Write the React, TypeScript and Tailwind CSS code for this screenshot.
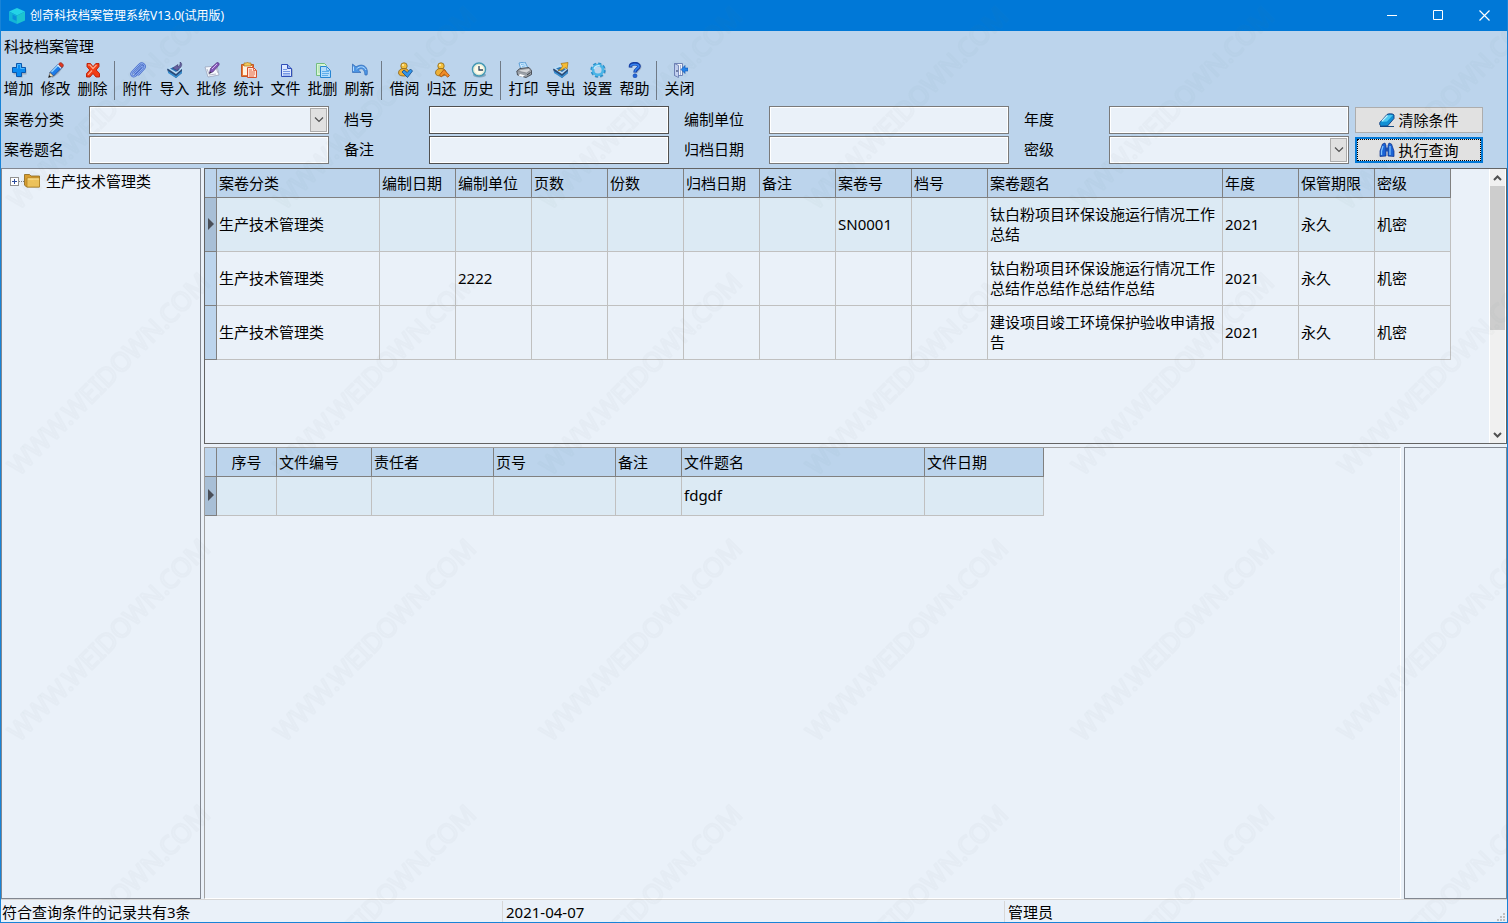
import { useState } from 'react'
import type { ReactNode } from 'react'

const ICONS: Record<string, ReactNode> = {
  add: (
    <>
      <path d="M6.5 3.5h5v4h4v5h-4v3h-5v-3h-4v-5h4z" fill="#8a9099" opacity=".6" />
      <path d="M5.5 1.5h5v4h4v5h-4v4h-5v-4h-4v-5h4z" fill="#0b8af0" stroke="#0a57ad" />
      <path d="M6.5 6.5v-4h3v4h4" fill="none" stroke="#4db8ff" />
    </>
  ),
  edit: (
    <>
      <path d="M4 15.5 10 11l5-7" fill="none" stroke="#7c8896" strokeWidth="1.5" opacity=".5" />
      <path d="m2 10.500 8.500-8.500 3.500 3.500-8.500 8.500z" fill="#1d7ce8" stroke="#0b3f92" strokeWidth=".8" />
      <path d="m3.500 10 7.500-7.500" stroke="#8fd2ff" strokeWidth="1.5" />
      <path d="m10.500 2 1.200-1c1.500-1.200 4.600 1.700 3.300 3.400l-1.200 1.200z" fill="#e23a22" stroke="#8f1c10" strokeWidth=".7" />
      <path d="m9.700 3 3.400 3.400" stroke="#e8eef5" strokeWidth="1.200" />
      <path d="m2 10.500-1.500 5L5.500 14z" fill="#f5e2b4" stroke="#4b4b55" strokeWidth=".6" />
      <path d="m.5 15.500.8-2.500 1.700 1.700z" fill="#111" />
    </>
  ),
  remove: (
    <>
      <path d="M2 1.500h3.500L8 4.700l2.800-3.200H14v3L11.200 8l3.300 3.500V15H11l-3-3.500L5 15H1.500v-3.500L4.800 8 2 4.700z" fill="#f23c14" stroke="#b81c06" strokeWidth=".9" />
      <path d="M3 3h2l3 3.500L11.500 3M3 12.800 7 8.500" fill="none" stroke="#ffab8c" strokeWidth="1.2" />
    </>
  ),
  attach: (
    <>
      <path d="m4.500 11.500 6.500-7c1.500-1.300 3 .2 1.800 1.600L6 13.300c-2.800 2.700-6.200-.5-3.700-3.300L9.500 2.500c2.800-2.600 7 .7 4.500 4L8.500 12.500" fill="none" stroke="#4a6fce" strokeWidth="2.200" strokeLinecap="round" />
      <path d="m4.500 11.500 6.500-7c1.500-1.300 3 .2 1.800 1.600L6 13.300c-2.800 2.700-6.200-.5-3.700-3.300L9.500 2.500c2.800-2.600 7 .7 4.500 4L8.500 12.500" fill="none" stroke="#9dbcf7" strokeWidth=".9" strokeLinecap="round" />
    </>
  ),
  importIn: (
    <>
      <path d="m0 7 5-3 10 3v4l-6 5L1 10z" fill="#2a4b78" />
      <path d="m0 6 6-3 10 3-7 6z" fill="#bcdcf5" />
      <path d="m3 6.500 4-1.500 6 2-4 3z" fill="#2d77b8" />
      <path d="m1 9 8 5 6-5v2l-6 5-8-5z" fill="#398fd0" />
      <path d="M13 0c3 1 2 6-2 7v2L5.500 6 11 2.500V5c1.500-.8 2.500-2.500 2-5z" fill="#66609f" stroke="#353565" strokeWidth=".5" />
    </>
  ),
  batchEdit: (
    <>
      <path d="m1 5 12-1 2 9-11 2z" fill="#f7faff" stroke="#949cb5" strokeWidth=".7" />
      <path d="m3 7 2 5M12 6l2 5M5 13l7-1" stroke="#a3a9bd" strokeWidth=".8" />
      <path d="m5.500 11 1-4.500 6-5.500c1.200-1.200 3.500.2 2.300 2.300l-6 6.700z" fill="#8257b8" stroke="#4d2e78" strokeWidth=".7" />
      <path d="m8 7 5-5" stroke="#d9b8ef" />
      <path d="m4.500 12.500 2-3 1 1z" fill="#35313f" />
    </>
  ),
  stats: (
    <>
      <path d="M.5 2.500h12v12H.5z" fill="#e87938" stroke="#c05724" />
      <path d="M2 4h9v9H2z" fill="#fff2df" />
      <path d="M3 1h2.500l1-1 1 1H10v3H3z" fill="#f3c65b" stroke="#a87824" strokeWidth=".7" />
      <path d="M6.500 5.500h6l3 3v7h-9z" fill="#ffe2d4" stroke="#d54f2b" />
      <path d="M12.500 5.500v3h3M8 8h3M8 10h6M8 12h6M8 14h5" fill="none" stroke="#e0623f" strokeWidth=".9" />
    </>
  ),
  file: (
    <>
      <path d="M4 3.500h7l4 4V15H4z" fill="#7e8ba5" opacity=".5" />
      <path d="M3.500 2.500h6l4 4v8h-10z" fill="#dbe7ff" stroke="#304fb8" />
      <path d="M9.500 2.500v4h4" fill="#8daae8" stroke="#304fb8" />
      <path d="M5 7.500h4M5 9.500h7M5 11.500h7M5 13h7" stroke="#7597e4" />
    </>
  ),
  batchDelete: (
    <>
      <path d="M1.500 1.500h8l2 2v10h-10z" fill="#d8f5d6" stroke="#74bd80" />
      <path d="M3 4h3M3 6h3M3 8h3M3 10h3" stroke="#a3daa5" />
      <path d="M5.500 4.500h6l4 4v7h-10z" fill="#b4dcfb" stroke="#2785d2" />
      <path d="M11.500 4.500v4h4M7 9.500h7M7 11.500h7M7 13.500h6" fill="none" stroke="#5fadea" />
    </>
  ),
  refresh: (
    <>
      <path d="M.5 2v8.500H9L6.300 8c3-2.500 6.200-1.500 6.700 5h2C17 6 11.500 0 4 4.800z" fill="#4b94e3" stroke="#346ab4" strokeWidth=".7" />
      <path d="M1.500 4.500v4.500M4.500 7c3-3.200 7.500-3 9.500 1" fill="none" stroke="#b5dcff" />
    </>
  ),
  borrow: (
    <>
      <circle cx="7" cy="4" r="3.200" fill="#f6c23d" stroke="#8a6516" strokeWidth=".8" />
      <path d="M1.500 11c0-3 2-4.500 5.500-4.500s5 2 5 4.500-2.500 3-5 3-5.500-.5-5.500-3z" fill="#eeb037" stroke="#8a6516" strokeWidth=".8" />
      <circle cx="6" cy="3" r="1" fill="#fff1b8" />
      <path d="m5 10 2-2 3.200 2.500L13.500 7l2 2-5 6.500z" fill="#3095ec" stroke="#124887" strokeWidth=".8" />
    </>
  ),
  giveBack: (
    <>
      <circle cx="7" cy="4" r="3.200" fill="#f6c23d" stroke="#8a6516" strokeWidth=".8" />
      <path d="M1.500 11c0-3 2-4.500 5.500-4.500s5 2 5 4.500-2.500 3-5 3-5.500-.5-5.500-3z" fill="#eeb037" stroke="#8a6516" strokeWidth=".8" />
      <circle cx="6" cy="3" r="1" fill="#fff1b8" />
      <path d="m5.500 13 4.500-5.500 5.500 6-1.700 1.700-3.600-3-3 2.800z" fill="#f08c28" stroke="#a24b10" strokeWidth=".8" />
    </>
  ),
  history: (
    <>
      <ellipse cx="8.500" cy="13" rx="6.500" ry="2.500" fill="#6889a0" opacity=".6" />
      <circle cx="8" cy="7.500" r="6.500" fill="#fffbe8" stroke="#4599b5" strokeWidth="1.500" />
      <circle cx="8" cy="7.500" r="5.200" fill="none" stroke="#c3dbc9" strokeWidth=".7" />
      <path d="M8 4v4h4" fill="none" stroke="#2b4660" strokeWidth="1.300" />
    </>
  ),
  print: (
    <>
      <path d="m3 1 6-1 3 6-7 2z" fill="#cfeaff" stroke="#5197d2" strokeWidth=".9" />
      <path d="m5 2.500 3.500-.5M6 4.500l3.500-.7" stroke="#66aee5" strokeWidth=".8" />
      <path d="M.8 9 4 6.500l9-1 2.500 3v4L10 15.500 1.500 13z" fill="#9da3aa" stroke="#42464e" strokeWidth=".9" />
      <path d="m1.500 9 9 2 4.500-3-2.500-1.500-7.500 1z" fill="#d4d6d9" stroke="#676b73" strokeWidth=".5" />
      <path d="m4 12 5 1.500-2.500 1.500-4-1.500z" fill="#fff" />
      <path d="m11 13 3.500-2.500" stroke="#383c42" />
    </>
  ),
  exportOut: (
    <>
      <path d="m0 7 5-3 10 3v4l-6 5L1 10z" fill="#2a4b78" />
      <path d="m0 6 6-3 10 3-7 6z" fill="#bcdcf5" />
      <path d="m3 6.500 4-1.500 6 2-4 3z" fill="#2d77b8" />
      <path d="m1 9 8 5 6-5v2l-6 5-8-5z" fill="#398fd0" />
      <path d="M8 1.500 15 .5l-1 6.500-2-1.500c-1.500 2-3.500 3-7 3 2.500-1 3.500-2.500 4.500-4.500z" fill="#f6bd35" stroke="#a37112" strokeWidth=".7" />
    </>
  ),
  settings: (
    <>
      <circle cx="8.500" cy="8.700" r="6.500" fill="none" stroke="#6786a1" strokeWidth="2" strokeDasharray="3 2.1" opacity=".5" />
      <circle cx="8" cy="8" r="6.600" fill="none" stroke="#2b91cc" strokeWidth="2" strokeDasharray="3 2.18" />
      <circle cx="8" cy="8" r="4.900" fill="none" stroke="#4bb5e7" strokeWidth="2.600" />
      <path d="M4 7a4.500 4.500 0 0 1 6-3" fill="none" stroke="#c7edff" strokeWidth="1.200" />
    </>
  ),
  help: (
    <>
      <path d="M4 6V4.500C4 1 13.500 1 13 5c-.3 2.500-3.500 3-4 6" fill="none" stroke="#7c8799" strokeWidth="3" opacity=".5" />
      <path d="M3.500 5.500V4C4 .8 12.500.8 12 4.500 11.700 7 8 7 8 10.500" fill="none" stroke="#143fa5" strokeWidth="3.500" />
      <path d="M3.500 4.500C4 1.500 12 1.500 11.800 4.500 11.500 6.500 8 7 8 9.800" fill="none" stroke="#3682ef" strokeWidth="1.700" />
      <circle cx="8" cy="13.800" r="2" fill="#2166d8" stroke="#143fa5" strokeWidth=".6" />
    </>
  ),
  close: (
    <>
      <path d="M2.500 1.500h8v12h-8z" fill="#f3f6fd" stroke="#7185b8" />
      <path d="m2.500 1.500 4 2v12l-4-2z" fill="#c3d0f0" stroke="#6276ad" strokeWidth=".8" />
      <path d="M8.500 3v10" stroke="#a9b6da" />
      <circle cx="5" cy="9" r=".9" fill="#4a597f" />
      <path d="m9 7.500 4-4v2.500h3v3h-3v2.500z" fill="#2384ec" stroke="#1253ad" strokeWidth=".6" />
    </>
  ),
  eraser: (
    <>
      <path d="M1 14.500h14" stroke="#174b82" />
      <path d="m.8 10.500 7.200-8c.8-1 6.500-1 7 .5v3.500l-6.500 7.500-6 .2C1 14 .3 12 .8 10.500z" fill="#1290d4" stroke="#123a7c" strokeWidth=".9" />
      <path d="m2 10 6.500-6.800 5.500-.2-6 6.500z" fill="#4cc8f2" />
      <path d="m3 9 5.500-5.500" stroke="#c0f1ff" strokeWidth="1.200" />
    </>
  ),
  find: (
    <>
      <path d="M3.500 2 6 1l1 2.500V14l-6 .5V9zM12.500 2 10 1 9 3.500V14l6 .5V9z" fill="#1b63d6" stroke="#0a2c88" strokeWidth=".7" />
      <path d="M6.500 5.500h3v4h-3z" fill="#1c4fb0" />
      <path d="M4 4 2.500 9v4M11 4v9" fill="none" stroke="#7fc4ff" strokeWidth="1.300" />
    </>
  ),
  folder: (
    <>
      <path d="M.5 1.500h5l1.500 1.500h8.500v11H2.500l-2-2z" fill="#d99d2f" stroke="#8c6516" strokeWidth=".8" />
      <path d="M3 5h12.500v9H3z" fill="#f0c45a" stroke="#ad7e20" strokeWidth=".7" />
      <path d="M3.800 6h11" stroke="#ffe8a4" />
    </>
  ),
}

function Icon({ name }: { name: string }) {
  return (
    <svg viewBox="0 0 16 16" className="h-4 w-4 shrink-0" aria-hidden="true">
      {ICONS[name]}
    </svg>
  )
}

const TOOLBAR = [
  [['add', '增加'], ['edit', '修改'], ['remove', '删除']],
  [['attach', '附件'], ['importIn', '导入'], ['batchEdit', '批修'], ['stats', '统计'], ['file', '文件'], ['batchDelete', '批删'], ['refresh', '刷新']],
  [['borrow', '借阅'], ['giveBack', '归还'], ['history', '历史']],
  [['print', '打印'], ['exportOut', '导出'], ['settings', '设置'], ['help', '帮助']],
  [['close', '关闭']],
]

const FIELDS = [
  { id: 'category', label: '案卷分类', kind: 'select' },
  { id: 'fileNo', label: '档号', kind: 'dark' },
  { id: 'unit', label: '编制单位', kind: 'text' },
  { id: 'year', label: '年度', kind: 'text' },
  { id: 'title', label: '案卷题名', kind: 'text' },
  { id: 'remark', label: '备注', kind: 'dark' },
  { id: 'archiveDate', label: '归档日期', kind: 'text' },
  { id: 'secret', label: '密级', kind: 'select' },
]

const VOLUME_COLUMNS = ['案卷分类', '编制日期', '编制单位', '页数', '份数', '归档日期', '备注', '案卷号', '档号', '案卷题名', '年度', '保管期限', '密级']

const VOLUMES = [
  ['生产技术管理类', '', '', '', '', '', '', 'SN0001', '', '钛白粉项目环保设施运行情况工作总结', '2021', '永久', '机密'],
  ['生产技术管理类', '', '2222', '', '', '', '', '', '', '钛白粉项目环保设施运行情况工作总结作总结作总结作总结', '2021', '永久', '机密'],
  ['生产技术管理类', '', '', '', '', '', '', '', '', '建设项目竣工环境保护验收申请报告', '2021', '永久', '机密'],
]

const FILE_COLUMNS = ['序号', '文件编号', '责任者', '页号', '备注', '文件题名', '文件日期']
const FILES = [['', '', '', '', '', 'fdgdf', '']]

function Field({ id, label, kind }: { id: string; label: string; kind: string }) {
  return (
    <div className="flex h-7 items-center">
      <label htmlFor={id} className="w-[85px] shrink-0 pb-0.5">
        {label}
      </label>
      {kind === 'select' ? (
        <div className="relative h-7 w-60 border border-[#7a7a7a] bg-white p-px">
          <select id={id} className="block h-full w-full appearance-none bg-[#eaf1f9] px-1 outline-none">
            <option value=""></option>
          </select>
          <span className="pointer-events-none absolute inset-y-px right-px flex w-[17px] items-center justify-center border border-[#adadad] bg-[#e1e1e1]">
            <svg viewBox="0 0 10 6" className="h-1.5 w-2.5">
              <path d="m1 .5 4 4 4-4" fill="none" stroke="#505050" strokeWidth="1.2" />
            </svg>
          </span>
        </div>
      ) : (
        <div className={`h-7 w-60 border bg-white p-px ${kind === 'dark' ? 'border-[#505050]' : 'border-[#7a7a7a]'}`}>
          <input id={id} type="text" className="block h-full w-full bg-[#eaf1f9] px-1 outline-none" />
        </div>
      )}
    </div>
  )
}

type GridProps = {
  columns: string[]
  widths: string[]
  rows: string[][]
  rowHeight: string
  tableWidth: string
  centerFirst?: boolean
}

function DataGrid({ columns, widths, rows, rowHeight, tableWidth, centerFirst }: GridProps) {
  const [current, setCurrent] = useState(0)

  return (
    <table className={`table-fixed border-separate border-spacing-0 leading-5 ${tableWidth}`}>
      <colgroup>
        <col className="w-3" />
        {widths.map((w, i) => (
          <col key={i} className={w} />
        ))}
      </colgroup>
      <thead>
        <tr className="h-[29px] bg-[#bcd4ec]">
          <th className="border-r border-b border-[#808080] p-0" />
          {columns.map((c, i) => (
            <th
              key={c}
              className={`border-r border-b border-[#808080] p-0 font-normal ${centerFirst && i === 0 ? 'text-center' : 'pl-0.5 text-left'}`}
            >
              {c}
            </th>
          ))}
        </tr>
      </thead>
      <tbody>
        {rows.map((row, r) => (
          <tr key={r} onClick={() => setCurrent(r)} className={`${rowHeight} ${r === current ? 'bg-[#dceaf4]' : ''}`}>
            <td className={`border-r border-b border-[#808080] p-0 pb-0.5 ${r === current ? 'bg-[#a8bfd6]' : 'bg-[#bcd4ec]'}`}>
              {r === current && (
                <svg viewBox="0 0 6 12" className="ml-[3px] block h-3 w-1.5">
                  <path d="M0 0v12l6-6z" fill="#4a4f58" />
                </svg>
              )}
            </td>
            {row.map((cell, i) => (
              <td key={i} className="border-r border-b border-[#c0c0c0] p-0 pb-0.5 pl-0.5">
                {cell}
              </td>
            ))}
          </tr>
        ))}
      </tbody>
    </table>
  )
}

function Watermark() {
  return (
    <svg className="pointer-events-none absolute inset-0 h-full w-full" aria-hidden="true">
      <defs>
        <pattern id="mark" width="266" height="266" patternUnits="userSpaceOnUse">
          <text
            x="108"
            y="117"
            textAnchor="middle"
            transform="rotate(-45 108 108)"
            fontSize="26"
            fill="none"
            stroke="#5c6670"
            strokeOpacity="0.035"
            strokeWidth="2"
            strokeLinejoin="round"
          >
            WWW.WEIDOWN.COM
          </text>
        </pattern>
      </defs>
      <rect width="100%" height="100%" fill="url(#mark)" />
    </svg>
  )
}

export default function App() {
  return (
    <div className="relative flex min-h-screen flex-col overflow-hidden border-x border-b border-[#1883d7] bg-[#eaf1f9] font-['Noto_Sans','Noto_Sans_CJK_SC',sans-serif] text-[15px] leading-5 text-black">
      {/* Title bar */}
      <header className="flex h-[31px] items-center bg-[#0078d7] pl-2 text-xs text-white">
        <svg viewBox="0 0 16 16" className="mr-[5px] h-4 w-4" aria-hidden="true">
          <path d="m8 0 8 3.500-8 4-8-4z" fill="#23d3e6" />
          <path d="m0 3.500 8 4V16l-8-3.500z" fill="#12b4d8" />
          <path d="m8 7.500 8-4v9L8 16z" fill="#1cc4cf" />
          <path d="m3.500 6.500 4 2v4.500l-4-2z" fill="#0a8fd9" />
        </svg>
        <h1 className="flex-1">创奇科技档案管理系统V13.0(试用版)</h1>
        <button aria-label="最小化" className="flex h-full w-[46px] items-center justify-center hover:bg-white/10">
          <svg viewBox="0 0 11 11" className="h-[11px] w-[11px]">
            <path d="M0 5.500h10" stroke="#fff" />
          </svg>
        </button>
        <button aria-label="最大化" className="flex h-full w-[46px] items-center justify-center hover:bg-white/10">
          <svg viewBox="0 0 11 11" className="h-[11px] w-[11px]">
            <path d="M.5.5h9v9h-9z" fill="none" stroke="#fff" />
          </svg>
        </button>
        <button aria-label="关闭窗口" className="flex h-full w-[46px] items-center justify-center hover:bg-[#e81123]">
          <svg viewBox="0 0 11 11" className="h-[11px] w-[11px]">
            <path d="m.5.5 10 10m0-10-10 10" stroke="#fff" strokeWidth="1.2" />
          </svg>
        </button>
      </header>

      <div className="bg-[#bcd4ec] pt-[5px] pb-1">
        <h2 className="pl-[3px]">科技档案管理</h2>

        {/* Toolbar */}
        <nav className="mt-1 -ml-px flex h-10">
          {TOOLBAR.map((group, g) => (
            <div key={g} className="flex">
              {g > 0 && <span className="mt-px mr-1 ml-[3px] w-px bg-[#707a86]" />}
              {group.map(([icon, label]) => (
                <button key={label} className="flex w-[37px] flex-col items-center pt-0.5 hover:bg-white/30">
                  <Icon name={icon} />
                  <span>{label}</span>
                </button>
              ))}
            </div>
          ))}
        </nav>

        {/* Search form */}
        <form className="mt-1.5 flex gap-1.5 pl-[3px]" onSubmit={(e) => e.preventDefault()}>
          <div className="grid grid-cols-4 gap-x-[15px] gap-y-0.5">
            {FIELDS.map((f) => (
              <Field key={f.id} {...f} />
            ))}
          </div>
          <div className="flex w-32 flex-col gap-1 py-px">
            <button type="reset" className="flex h-[26px] items-center justify-center gap-[3px] border border-[#adadad] bg-[#e1e1e1]">
              <Icon name="eraser" />
              清除条件
            </button>
            <button type="submit" className="h-[26px] border-2 border-[#0078d7] bg-[#e1e1e1]">
              <span className="flex h-full items-center justify-center gap-[3px] border border-dotted border-black">
                <Icon name="find" />
                执行查询
              </span>
            </button>
          </div>
        </form>
      </div>

      <main className="flex flex-1 gap-[3px]">
        {/* Category tree */}
        <aside className="w-[200px] shrink-0 border border-[#828790] pt-0.5 pl-2">
          <div className="flex h-5 items-center">
            <button aria-label="展开" className="flex h-[9px] w-[9px] items-center justify-center border border-[#919191] bg-white">
              <svg viewBox="0 0 5 5" className="h-[5px] w-[5px]">
                <path d="M0 2.500h5M2.500 0v5" stroke="#2b4a9c" />
              </svg>
            </button>
            <span className="w-[5px] border-t border-dotted border-[#808080]" />
            <Icon name="folder" />
            <span className="ml-1.5">生产技术管理类</span>
          </div>
        </aside>

        <div className="flex min-w-0 flex-1 flex-col gap-[3px]">
          <section className="flex h-[276px] border border-[#646464]">
            <div className="min-w-0 flex-1">
              <DataGrid
                columns={VOLUME_COLUMNS}
                widths={['w-[163px]', 'w-[76px]', 'w-[76px]', 'w-[76px]', 'w-[76px]', 'w-[76px]', 'w-[76px]', 'w-[76px]', 'w-[76px]', 'w-[235px]', 'w-[76px]', 'w-[76px]', 'w-[76px]']}
                rows={VOLUMES}
                rowHeight="h-[54px]"
                tableWidth="w-[1246px]"
              />
            </div>
            <div className="flex w-[17px] flex-col border-x border-white bg-[#f0f0f0]">
              <button aria-label="向上滚动" className="flex h-[17px] items-center justify-center">
                <svg viewBox="0 0 9 6" className="h-1.5 w-[9px]">
                  <path d="m1 5 3.500-3.500L8 5" fill="none" stroke="#505050" strokeWidth="2" />
                </svg>
              </button>
              <div className="flex-1">
                <div className="h-36 bg-[#cdcdcd]" />
              </div>
              <button aria-label="向下滚动" className="flex h-[17px] items-center justify-center">
                <svg viewBox="0 0 9 6" className="h-1.5 w-[9px]">
                  <path d="M1 1l3.500 3.500L8 1" fill="none" stroke="#505050" strokeWidth="2" />
                </svg>
              </button>
            </div>
          </section>

          <div className="flex flex-1 gap-[3px]">
            <section className="min-w-0 flex-1 border border-t-[#a0a0a0] border-r-white border-b-white border-l-[#a0a0a0]">
              <DataGrid
                columns={FILE_COLUMNS}
                widths={['w-[60px]', 'w-[95px]', 'w-[122px]', 'w-[122px]', 'w-[66px]', 'w-[243px]', 'w-[119px]']}
                rows={FILES}
                rowHeight="h-[39px]"
                tableWidth="w-[839px]"
                centerFirst
              />
            </section>
            <aside className="w-[103px] border border-[#828790]" />
          </div>
        </div>
      </main>

      {/* Status bar */}
      <footer className="grid h-[23px] grid-cols-3 border-t border-[#d7d7d7]">
        <div className="my-px border-r border-[#d7d7d7] pt-px pl-px">符合查询条件的记录共有3条</div>
        <div className="my-px border-r border-[#d7d7d7] pt-px pl-[3px]">2021-04-07</div>
        <div className="my-px flex items-end justify-between pt-px pl-[3px]">
          <span>管理员</span>
          <svg viewBox="0 0 9 9" className="mr-px h-[9px] w-[9px]" aria-hidden="true">
            <path d="M6 0h2v2H6zM3 3h2v2H3zM6 3h2v2H6zM0 6h2v2H0zM3 6h2v2H3zM6 6h2v2H6z" fill="#bfbfbf" />
          </svg>
        </div>
      </footer>

      <Watermark />
    </div>
  )
}
